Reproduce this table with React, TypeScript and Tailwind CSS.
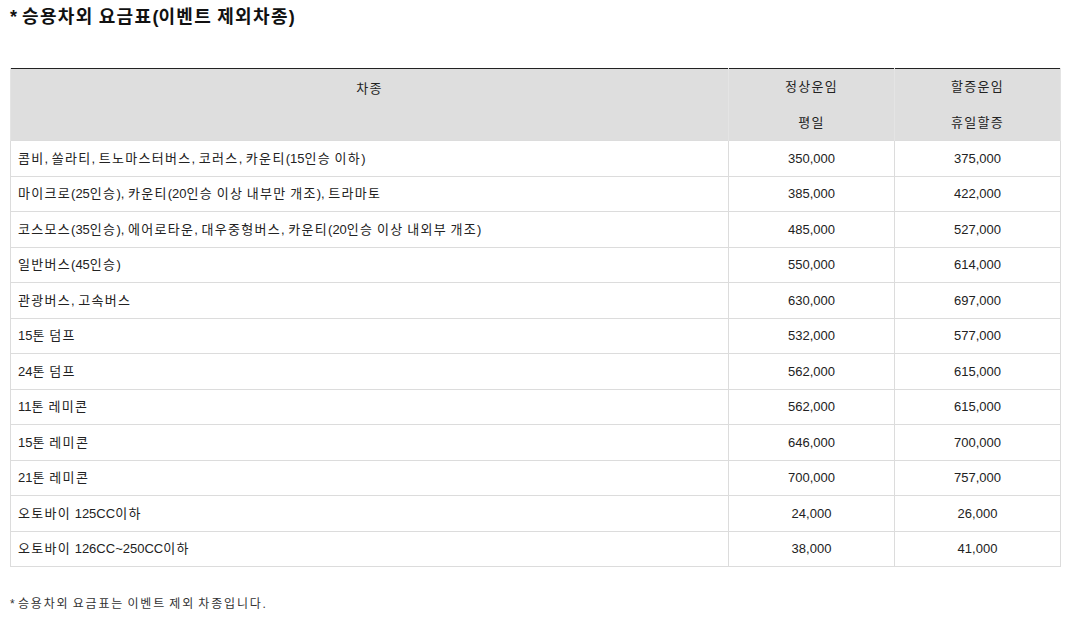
import type { ReactNode } from "react";

const rows: [string, string, string][] = [
  ["콤비, 쏠라티, 트노마스터버스, 코러스, 카운티(15인승 이하)", "350,000", "375,000"],
  ["마이크로(25인승), 카운티(20인승 이상 내부만 개조), 트라마토", "385,000", "422,000"],
  ["코스모스(35인승), 에어로타운, 대우중형버스, 카운티(20인승 이상 내외부 개조)", "485,000", "527,000"],
  ["일반버스(45인승)", "550,000", "614,000"],
  ["관광버스, 고속버스", "630,000", "697,000"],
  ["15톤 덤프", "532,000", "577,000"],
  ["24톤 덤프", "562,000", "615,000"],
  ["11톤 레미콘", "562,000", "615,000"],
  ["15톤 레미콘", "646,000", "700,000"],
  ["21톤 레미콘", "700,000", "757,000"],
  ["오토바이 125CC이하", "24,000", "26,000"],
  ["오토바이 126CC~250CC이하", "38,000", "41,000"],
];

// Hangul in the original is set a bit looser than Noto's 1em advance,
// so wrap hangul runs in a tracked span.
function Ko({ text, className = "tracking-[0.1em]" }: { text: string; className?: string }) {
  const parts: ReactNode[] = text.split(/([가-힣]+)/).map((p, i) =>
    /[가-힣]/.test(p) ? (
      <span key={i} className={className}>
        {p}
      </span>
    ) : (
      p
    )
  );
  return <>{parts}</>;
}

export default function App() {
  return (
    <div
      className="w-[1067px] h-[617px] bg-white px-[10px] pt-[6px] text-[#222]"
      style={{ fontFamily: '"Liberation Sans", "Noto Sans CJK KR", sans-serif' }}
    >
      <h2 className="text-[18px] font-bold leading-[22px] text-[#111]">
        <Ko text="* 승용차외 요금표(이벤트 제외차종)" className="tracking-[0.075em]" />
      </h2>

      <table className="mt-[40px] w-[1051px] border-collapse border-t border-t-[#222] text-[13px] table-fixed">
        <colgroup>
          <col className="w-[718px]" />
          <col className="w-[166px]" />
          <col className="w-[166px]" />
        </colgroup>
        <thead className="bg-[#dedede]">
          <tr className="h-[36px]">
            <th rowSpan={2} className="align-top pt-[10px] font-normal border-x border-[#e4e4e4]">
              <Ko text="차종" />
            </th>
            <th className="font-normal border-x border-[#e4e4e4]">
              <Ko text="정상운임" />
            </th>
            <th className="font-normal border-x border-[#e4e4e4]">
              <Ko text="할증운임" />
            </th>
          </tr>
          <tr className="h-[36px]">
            <th className="font-normal border-x border-[#e4e4e4]">
              <Ko text="평일" />
            </th>
            <th className="font-normal border-x border-[#e4e4e4]">
              <Ko text="휴일할증" />
            </th>
          </tr>
        </thead>
        <tbody>
          {rows.map(([name, normal, extra]) => (
            <tr key={name} className="h-[35.5px]">
              <td className="border border-[#dcdcdc] pl-[7px]">
                <Ko text={name} />
              </td>
              <td className="border border-[#dcdcdc] text-center">{normal}</td>
              <td className="border border-[#dcdcdc] text-center">{extra}</td>
            </tr>
          ))}
        </tbody>
      </table>

      <p className="mt-[28px] text-[12px] text-[#333]">
        <Ko text="* 승용차외 요금표는 이벤트 제외 차종입니다." className="tracking-[0.15em]" />
      </p>
    </div>
  );
}
